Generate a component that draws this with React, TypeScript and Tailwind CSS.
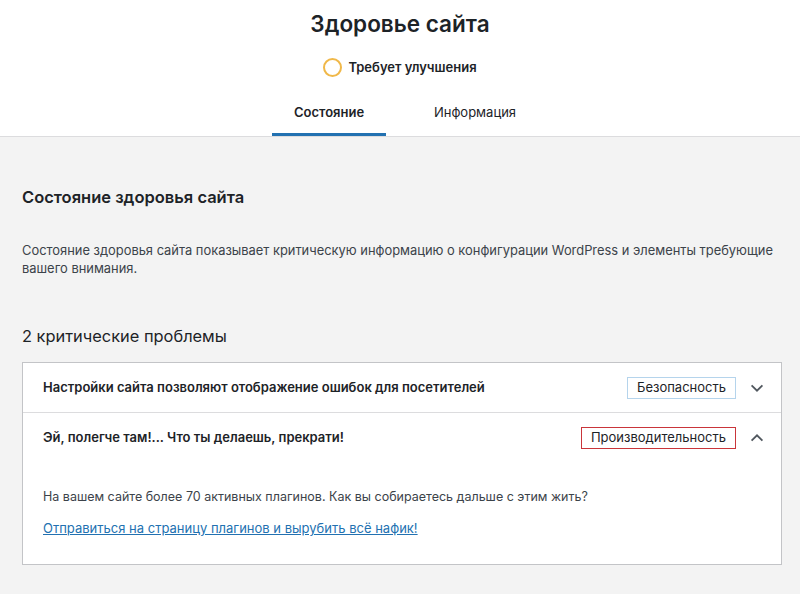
import React from 'react';

const font = { fontFamily: 'Inter, "Noto Sans", sans-serif' };

const Chevron: React.FC<{ up?: boolean }> = ({ up }) => (
  <svg width="18" height="18" viewBox="0 0 20 20" className="text-[#50575e]">
    <path
      d={up ? 'M4 13l6-6 6 6' : 'M4 7l6 6 6-6'}
      fill="none"
      stroke="currentColor"
      strokeWidth="2"
    />
  </svg>
);

const Issue: React.FC<{
  title: string;
  badge: string;
  badgeBorder: string;
  open?: boolean;
  children?: React.ReactNode;
}> = ({ title, badge, badgeBorder, open, children }) => (
  <div className="border-t border-[#dcdcde] first:border-t-0">
    <div className="flex items-center h-[49px] pl-[20px] pr-[15px]">
      <span className="flex-1 text-[13px] font-semibold text-[#1d2327]">{title}</span>
      <span
        className={`border ${badgeBorder} h-[22px] px-[9px] flex items-center text-[13px] text-[#1d2327]`}
      >
        {badge}
      </span>
      <span className="ml-[12px] w-[18px] flex justify-center">
        <Chevron up={open} />
      </span>
    </div>
    {open && children}
  </div>
);

export default function App() {
  return (
    <div className="w-[800px] h-[594px] bg-[#f3f3f3] overflow-hidden" style={font}>
      <div className="bg-white border-b border-[#dcdcde] flex flex-col items-center h-[137px]">
        <h1 className="mt-[10px] text-[22.5px] leading-[28px] font-semibold text-[#1d2327]">
          Здоровье сайта
        </h1>
        <div className="mt-[20px] flex items-center gap-[6px]">
          <span className="w-[19px] h-[19px] rounded-full border-2 border-[#f0b849]" />
          <span className="text-[13px] font-semibold text-[#1d2327]">Требует улучшения</span>
        </div>
        <div className="mt-auto flex pl-[2px]">
          <div className="w-[114px] h-[47px] flex items-center justify-center border-b-[3px] border-[#2271b1] text-[13px] font-semibold text-[#1d2327] pt-[3px]">
            Состояние
          </div>
          <div className="ml-[34px] w-[110px] h-[47px] flex items-center justify-center border-b-[3px] border-transparent text-[13px] text-[#1d2327] pt-[3px]">
            Информация
          </div>
        </div>
      </div>

      <div className="pl-[22px] pr-[18px]">
        <h2 className="mt-[48px] text-[16.5px] leading-[24px] font-semibold text-[#1d2327]">
          Состояние здоровья сайта
        </h2>
        <p className="mt-[33px] text-[12.9px] leading-[18px] text-[#3c434a]">
          Состояние здоровья сайта показывает критическую информацию о конфигурации WordPress и
          элементы требующие вашего внимания.
        </p>
        <h3 className="mt-[46px] text-[16.4px] leading-[24px] text-[#1d2327]">2 критические проблемы</h3>
        <div className="mt-[14px] bg-white border border-[#c3c4c7]">
          <Issue
            title="Настройки сайта позволяют отображение ошибок для посетителей"
            badge="Безопасность"
            badgeBorder="border-[#b5d4ec]"
          />
          <Issue
            title="Эй, полегче там!... Что ты делаешь, прекрати!"
            badge="Производительность"
            badgeBorder="border-[#c9353a]"
            open
          >
            <div className="pl-[20px] pr-[20px] pt-[26px] pb-[27px]">
              <p className="text-[12.5px] leading-[18px] text-[#3c434a]">
                На вашем сайте более 70 активных плагинов. Как вы собираетесь дальше с этим жить?
              </p>
              <a href="#" className="block mt-[13px] text-[13px] leading-[18px] text-[#2271b1] underline">
                Отправиться на страницу плагинов и вырубить всё нафик!
              </a>
            </div>
          </Issue>
        </div>
      </div>
    </div>
  );
}
